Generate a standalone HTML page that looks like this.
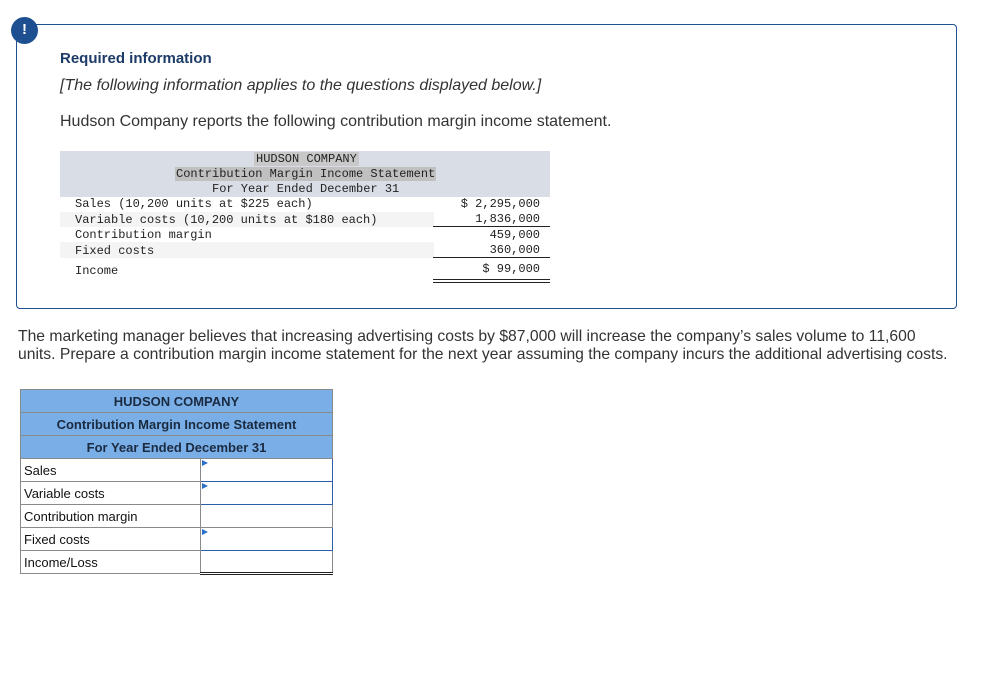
<!DOCTYPE html>
<html><head><style>
body{margin:0;width:999px;height:690px;background:#fff;position:relative;font-family:"Liberation Sans",sans-serif;overflow:hidden}
.a{position:absolute;white-space:nowrap}
.box{left:16px;top:24px;width:939px;height:283px;border:1px solid #1d4f91;border-radius:4px}
.ic{left:11px;top:17px;width:27px;height:27px;border-radius:50%;background:#1d4f91;color:#fff;font-weight:bold;font-size:15px;text-align:center;line-height:26px}
.mono{font-family:"Liberation Mono",monospace;font-size:12px;color:#222;line-height:14px}
.bt{border-collapse:collapse;font-size:13px;color:#111}
.bt td{border:1px solid #8a8a8a;height:22px;padding:0 3px;box-sizing:border-box}
.bt .h{background:#7aaee6;text-align:center;font-weight:bold;color:#1a2a40}
.inp{border:1px solid #2b5ea8 !important;position:relative}
.inp:before{content:"";position:absolute;left:1px;top:1px;border-left:6px solid #2b6fc9;border-top:3px solid transparent;border-bottom:3px solid transparent}
</style></head><body>
<div class="a box"></div>
<div class="a ic">!</div>
<div class="a" style="left:60px;top:50px;font-size:15px;font-weight:bold;color:#1d3b68">Required information</div>
<div class="a" style="left:60px;top:77px;font-size:16px;font-style:italic;color:#333">[The following information applies to the questions displayed below.]</div>
<div class="a" style="left:60px;top:113px;font-size:16px;color:#333">Hudson Company reports the following contribution margin income statement.</div>
<div class="a" style="left:60px;top:151px;width:490px;height:46px;background:#d9dde6"></div>
<div class="a mono" style="left:254px;top:152px;background:#c8c8c8;padding:0 2px">HUDSON COMPANY</div>
<div class="a mono" style="left:175px;top:167px;background:#c0c0c0;padding:0 1px">Contribution Margin Income Statement</div>
<div class="a mono" style="left:212px;top:182px">For Year Ended December 31</div>
<div class="a" style="left:60px;top:212px;width:374px;height:15px;background:#f4f4f4"></div>
<div class="a" style="left:60px;top:242px;width:374px;height:16px;background:#f4f4f4"></div>
<div class="a mono" style="left:75px;top:197px">Sales (10,200 units at $225 each)</div>
<div class="a mono" style="left:75px;top:213px">Variable costs (10,200 units at $180 each)</div>
<div class="a mono" style="left:75px;top:228px">Contribution margin</div>
<div class="a mono" style="left:75px;top:244px">Fixed costs</div>
<div class="a mono" style="left:75px;top:264px">Income</div>
<div class="a mono" style="left:434px;top:197px;width:106px;text-align:right">$ 2,295,000</div>
<div class="a mono" style="left:434px;top:212px;width:106px;text-align:right">1,836,000</div>
<div class="a" style="left:433px;top:226px;width:117px;border-top:1px solid #222"></div>
<div class="a mono" style="left:434px;top:228px;width:106px;text-align:right">459,000</div>
<div class="a mono" style="left:434px;top:243px;width:106px;text-align:right">360,000</div>
<div class="a" style="left:433px;top:257px;width:117px;border-top:1px solid #222"></div>
<div class="a mono" style="left:434px;top:262px;width:106px;text-align:right">$ 99,000</div>
<div class="a" style="left:433px;top:279px;width:117px;height:2px;border-top:1px solid #222;border-bottom:1px solid #222"></div>
<div class="a" style="left:18px;top:328px;width:930px;white-space:normal;font-size:15.7px;line-height:18px;color:#333">The marketing manager believes that increasing advertising costs by $87,000 will increase the company’s sales volume to 11,600 units. Prepare a contribution margin income statement for the next year assuming the company incurs the additional advertising costs.</div>
<table class="a bt" style="left:20px;top:389px;width:313px">
<tr><td colspan="2" class="h" style="height:23px">HUDSON COMPANY</td></tr>
<tr><td colspan="2" class="h" style="height:23px">Contribution Margin Income Statement</td></tr>
<tr><td colspan="2" class="h" style="height:23px">For Year Ended December 31</td></tr>
<tr><td style="width:180px;height:23px">Sales</td><td class="inp"></td></tr>
<tr><td style="height:23px">Variable costs</td><td class="inp"></td></tr>
<tr><td style="height:23px">Contribution margin</td><td style="border-top:1px solid #222"></td></tr>
<tr><td style="height:23px">Fixed costs</td><td class="inp"></td></tr>
<tr><td style="height:23px">Income/Loss</td><td style="border-top:1px solid #222;border-bottom:3px double #222"></td></tr>
</table>
</body></html>
